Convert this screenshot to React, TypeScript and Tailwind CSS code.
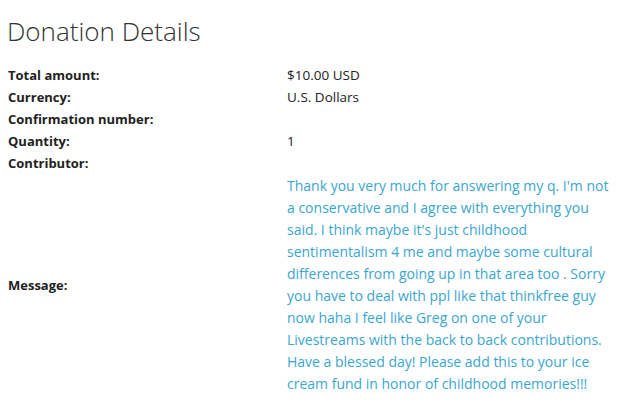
const rows = [
  { label: 'Total amount:', value: '$10.00 USD' },
  { label: 'Currency:', value: 'U.S. Dollars' },
  { label: 'Confirmation number:', value: '' },
  { label: 'Quantity:', value: '1' },
  { label: 'Contributor:', value: '' },
]

// line breaks kept as in the original message box
const messageLines = [
  "Thank you very much for answering my q. I'm not",
  'a conservative and I agree with everything you',
  "said. I think maybe it's just childhood",
  'sentimentalism 4 me and maybe some cultural',
  'differences from going up in that area too . Sorry',
  'you have to deal with ppl like that thinkfree guy',
  'now haha I feel like Greg on one of your',
  'Livestreams with the back to back contributions.',
  'Have a blessed day! Please add this to your ice',
  'cream fund in honor of childhood memories!!!',
]

export default function App() {
  return (
    <div className="w-[633px] h-[414px] bg-white text-[#222] font-['Open_Sans',sans-serif]">
      <h1 className="pl-[7px] pt-[12px] text-[26px] leading-[38px] font-light text-[#333]">
        Donation Details
      </h1>
      <div className="mt-[14px] pl-2 grid grid-cols-[279px_346px]">
        {rows.map(row => (
          <div key={row.label} className="contents">
            <div className="text-[13px] leading-[22px] font-bold">{row.label}</div>
            <div className="text-[13.5px] leading-[22px] h-[22px]">{row.value}</div>
          </div>
        ))}
        <div className="text-[13px] leading-[22px] font-bold self-center">Message:</div>
        <div className="text-[14px] leading-[22px] text-[#3aa6cf] pt-[1px]">
          {messageLines.map(line => (
            <span key={line} className="block whitespace-nowrap">{line}</span>
          ))}
        </div>
      </div>
    </div>
  )
}
